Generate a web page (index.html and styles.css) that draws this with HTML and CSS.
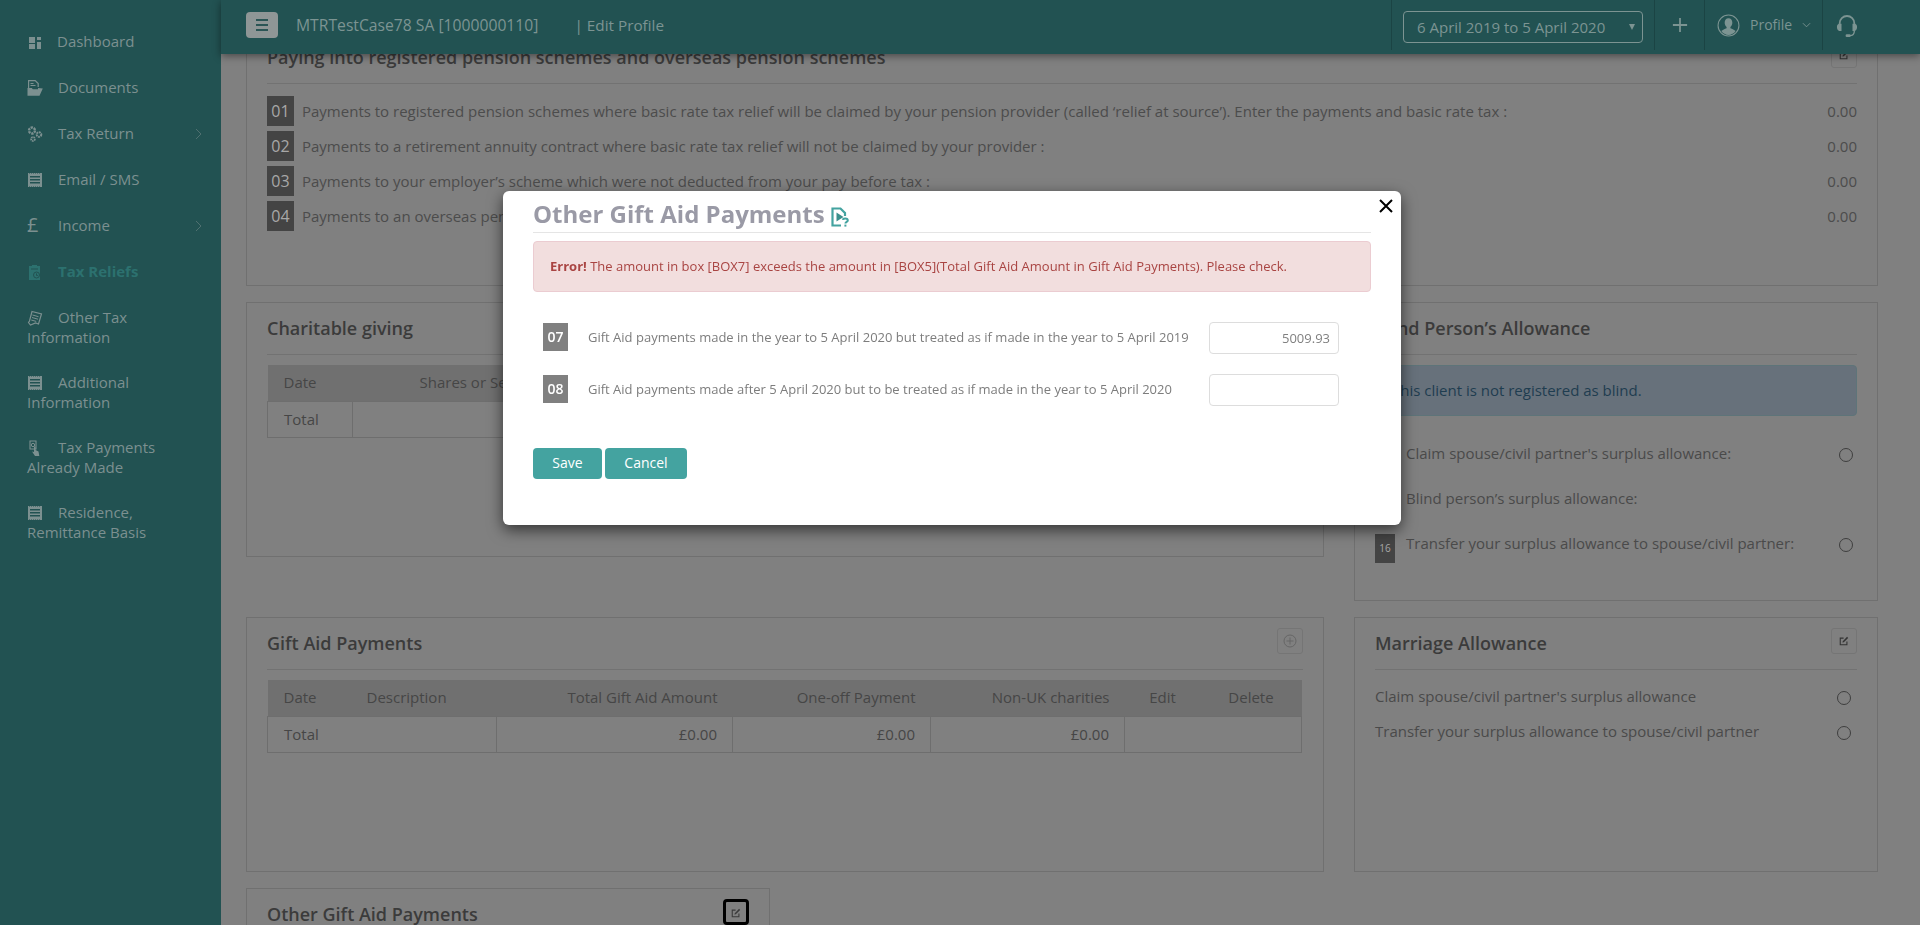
FILE: index.html
```html
<!DOCTYPE html>
<html lang="en">
<head>
<meta charset="utf-8">
<title>Edit Profile</title>
<link rel="stylesheet" href="styles.css">
</head>
<body>
<svg class="sprites" aria-hidden="true">
  <symbol id="receipt" viewBox="0 0 16 16">
    <path fill="currentColor" d="M1 1h14v14H1z"/>
    <path fill="#225252" d="M3 4h10v1.500H3zM3 7h10v1.500H3zM3 10h10v1.500H3z"/>
    <path fill="#225252" d="M2 1h1v.6H2zM4 1h1v.6H4zM6 1h1v.6H6zM8 1h1v.6H8zM10 1h1v.6h-1zM12 1h1v.6h-1zM2 14.400h1v.6H2zM4 14.400h1v.6H4zM6 14.400h1v.6H6zM8 14.400h1v.6H8zM10 14.400h1v.6h-1zM12 14.400h1v.6h-1z"/>
  </symbol>
  <symbol id="edit" viewBox="0 0 12 12">
    <path fill="none" stroke="currentColor" stroke-width="1.300" d="M9.500 6.500V10.500H1.500V2.500H5.500"/>
    <path fill="currentColor" d="M4.500 6.200 9.700 1l1.300 1.300-5.200 5.200-1.700.4z"/>
  </symbol>
  <symbol id="chev" viewBox="0 0 7 12">
    <path fill="none" stroke="currentColor" stroke-width="1" d="M1 1l5 5-5 5"/>
  </symbol>
</svg>

<div class="app">
  <aside class="sidebar">
    <nav class="nav">
      <a class="nav-item nav-first">
        <svg class="nav-icon" viewBox="0 0 16 16"><path fill="currentColor" d="M2 3h6v6H2zM10 3h4v3h-4zM2 10h6v5H2zM10 8h4v7h-4z"/></svg>Dashboard
      </a>
      <a class="nav-item">
        <svg class="nav-icon" viewBox="0 0 16 16"><path fill="none" stroke="currentColor" stroke-width="1.200" d="M1.600 9V.6h6.600l3 3V7"/><path stroke="currentColor" d="M3.500 3.500h3M3.500 5.500h5"/><path fill="currentColor" d="M.5 8h4.300l1 1.300H11V8l4.800.5L12.500 15.800H.5z"/></svg>Documents
      </a>
      <a class="nav-item">
        <svg class="nav-icon" viewBox="0 0 16 16"><g fill="none" stroke="currentColor"><circle cx="5" cy="4.500" r="3" stroke-width="2.400" stroke-dasharray="2.300 .8"/><circle cx="12" cy="8.500" r="2.300" stroke-width="2" stroke-dasharray="1.800 .6"/><circle cx="6" cy="13" r="1.900" stroke-width="1.800" stroke-dasharray="1.500 .6"/></g></svg>Tax Return
        <svg class="nav-chev"><use href="#chev"/></svg>
      </a>
      <a class="nav-item">
        <svg class="nav-icon"><use href="#receipt"/></svg>Email / SMS
      </a>
      <a class="nav-item">
        <span class="nav-glyph">£</span>Income
        <svg class="nav-chev"><use href="#chev"/></svg>
      </a>
      <a class="nav-item is-active">
        <svg class="nav-icon" viewBox="0 0 16 16"><path fill="currentColor" d="M2 2h3V1h5v1h3v14H2z"/><circle cx="9.500" cy="11" r="3" fill="none" stroke="#225252"/><path stroke="#225252" d="M9.500 9.500V11l1 1M4 5h7"/></svg>Tax Reliefs
      </a>
      <a class="nav-item nav-tall">
        <svg class="nav-icon" viewBox="0 0 16 16"><path fill="none" stroke="currentColor" stroke-width="1.200" d="M5 1.500l9.500 2.500-3 10-3-1-5 2-2-2.500 1-1.500z"/><path stroke="currentColor" d="M5.500 5l6 1.700M5 7.500l6 1.700M4.200 10l5 1.400"/></svg>Other Tax Information
      </a>
      <a class="nav-item nav-tall">
        <svg class="nav-icon"><use href="#receipt"/></svg>Additional Information
      </a>
      <a class="nav-item nav-tall">
        <svg class="nav-icon" viewBox="0 0 16 16"><path fill="none" stroke="currentColor" stroke-width="1.100" d="M3 1h6v8H3z"/><circle cx="6" cy="5" r="1.700" fill="none" stroke="currentColor"/><path fill="currentColor" d="M7 6.500h1.500V10l3 1.500.8 4.500H8L5 11.500l2 .5z"/></svg>Tax Payments Already Made
      </a>
      <a class="nav-item nav-tall">
        <svg class="nav-icon"><use href="#receipt"/></svg>Residence, Remittance Basis
      </a>
    </nav>
  </aside>

  <div class="main">
    <header class="topbar">
      <button class="menu-btn" type="button" aria-label="Menu"><span></span><span></span><span></span></button>
      <span class="client">MTRTestCase78 SA [1000000110]</span>
      <span class="crumb">| Edit Profile</span>
      <div class="top-tools">
        <div class="tool tool-period">
          <div class="period"><span>6 April 2019 to 5 April 2020</span><i class="caret"></i></div>
        </div>
        <div class="tool tool-plus">
          <svg class="plus" viewBox="0 0 18 18"><path stroke="currentColor" stroke-width="2" d="M9 1v16M1 9h16"/></svg>
        </div>
        <div class="tool tool-profile">
          <svg class="avatar" viewBox="0 0 24 24"><circle cx="12" cy="12" r="10.900" fill="none" stroke="currentColor" stroke-width="1.100"/><path fill="currentColor" d="M12 4.500c2.600 0 4 2 4 4.600 0 2-1 3.600-2 4.400v1.300c2 .7 4 1.500 5.500 3A10 10 0 0 1 12 22a10 10 0 0 1-7.500-4.200c1.500-1.500 3.500-2.300 5.500-3v-1.300c-1-.8-2-2.400-2-4.400 0-2.600 1.400-4.600 4-4.600z"/></svg>
          <span class="profile-name">Profile</span>
          <svg class="profile-chev" viewBox="0 0 10 6"><path fill="none" stroke="currentColor" d="M1 1l4 4 4-4"/></svg>
        </div>
        <div class="tool tool-help">
          <svg class="headset" viewBox="0 0 24 26"><path fill="none" stroke="currentColor" stroke-width="2" d="M4 12V9.500a8 8 0 0 1 16 0V12"/><path fill="currentColor" d="M3.500 10C1.500 10.500 1 12 1 13.500S1.500 17 3.500 18H6v-8zM20.500 10c2 .5 2.500 2 2.500 3.500S22.500 17 20.500 18H18v-8z"/><path fill="none" stroke="currentColor" stroke-width="1.500" d="M20 18c0 3-2 5-5 5"/><rect x="10.500" y="21.500" width="5.500" height="3" rx="1.200" fill="currentColor"/></svg>
        </div>
      </div>
    </header>

    <div class="content">
      <section class="card card-pension">
        <div class="card-head">
          <h2>Paying into registered pension schemes and overseas pension schemes</h2>
          <button class="icon-btn" type="button" aria-label="Edit"><svg><use href="#edit"/></svg></button>
        </div>
        <div class="pension-list">
          <div class="line"><b class="num">01</b><span>Payments to registered pension schemes where basic rate tax relief will be claimed by your pension provider (called ‘relief at source’). Enter the payments and basic rate tax :</span><em>0.00</em></div>
          <div class="line"><b class="num">02</b><span>Payments to a retirement annuity contract where basic rate tax relief will not be claimed by your provider :</span><em>0.00</em></div>
          <div class="line"><b class="num">03</b><span>Payments to your employer’s scheme which were not deducted from your pay before tax :</span><em>0.00</em></div>
          <div class="line"><b class="num">04</b><span>Payments to an overseas pension scheme which is not UK-registered :</span><em>0.00</em></div>
        </div>
      </section>

      <div class="row row-second">
        <section class="card card-wide">
          <div class="card-head"><h2>Charitable giving</h2></div>
          <table class="data charity">
            <colgroup><col class="c1"><col class="c2"><col></colgroup>
            <thead><tr><th colspan="2">Date</th><th>Shares or Securities</th></tr></thead>
            <tbody><tr><td>Total</td><td colspan="2"></td></tr></tbody>
          </table>
        </section>
        <section class="card card-side card-blind">
          <div class="card-head"><h2>Blind Person’s Allowance</h2></div>
          <div class="alert-info">This client is not registered as blind.</div>
          <div class="opts">
            <div class="opt"><b class="num-sm">14</b><span>Claim spouse/civil partner's surplus allowance:</span><i class="radio"></i></div>
            <div class="opt"><b class="num-sm">15</b><span>Blind person’s surplus allowance:</span></div>
            <div class="opt"><b class="num-sm">16</b><span>Transfer your surplus allowance to spouse/civil partner:</span><i class="radio"></i></div>
          </div>
        </section>
      </div>

      <div class="row">
        <section class="card card-wide">
          <div class="card-head">
            <h2>Gift Aid Payments</h2>
            <button class="icon-btn" type="button" aria-label="Add">
              <svg class="add" viewBox="0 0 14 14"><circle cx="7" cy="7" r="6" fill="none" stroke="currentColor"/><path stroke="currentColor" d="M7 3.500v7M3.500 7h7"/></svg>
            </button>
          </div>
          <table class="data gift">
            <colgroup><col class="g1"><col class="g2"><col class="g3"><col class="g4"><col class="g5"><col class="g6"><col class="g7"></colgroup>
            <thead>
              <tr><th>Date</th><th>Description</th><th class="r">Total Gift Aid Amount</th><th class="r">One-off Payment</th><th class="r">Non-UK charities</th><th class="c">Edit</th><th class="c">Delete</th></tr>
            </thead>
            <tbody>
              <tr><td colspan="2">Total</td><td class="r">£0.00</td><td class="r">£0.00</td><td class="r">£0.00</td><td colspan="2"></td></tr>
            </tbody>
          </table>
        </section>
        <section class="card card-side">
          <div class="card-head">
            <h2>Marriage Allowance</h2>
            <button class="icon-btn" type="button" aria-label="Edit"><svg><use href="#edit"/></svg></button>
          </div>
          <div class="marriage">
            <div class="m-opt"><span>Claim spouse/civil partner's surplus allowance</span><i class="radio"></i></div>
            <div class="m-opt"><span>Transfer your surplus allowance to spouse/civil partner</span><i class="radio"></i></div>
          </div>
        </section>
      </div>

      <div class="row">
        <section class="card card-side">
          <div class="card-head">
            <h2>Other Gift Aid Payments</h2>
            <button class="icon-btn is-focus" type="button" aria-label="Edit"><svg><use href="#edit"/></svg></button>
          </div>
        </section>
      </div>
    </div>
  </div>
</div>

<div class="modal" role="dialog">
  <button class="close" type="button" aria-label="Close"><svg viewBox="0 0 14 14"><path stroke="#000" stroke-width="2" d="M1 1l12 12M13 1L1 13"/></svg></button>
  <div class="modal-head">
    <h1>Other Gift Aid Payments</h1>
    <svg class="help" viewBox="0 0 18 20"><path fill="none" stroke="currentColor" stroke-width="2.200" d="M10 18.500H1.500V1.500h8l4.500 4.500v3"/><path fill="#3c8f8c" d="M5.500 5.500l7 4.500-7 4.500z"/><path fill="none" stroke="currentColor" stroke-width="2" d="M11.800 12.800c.3-1.700 5-1.700 5 .6 0 1.600-2.400 1.500-2.400 3.200"/><rect x="13.400" y="17.600" width="2" height="2" fill="currentColor"/></svg>
  </div>
  <div class="alert-error"><strong>Error!</strong> The amount in box [BOX7] exceeds the amount in [BOX5](Total Gift Aid Amount in Gift Aid Payments). Please check.</div>
  <form class="modal-form">
    <div class="field"><b class="num-md">07</b><label for="b7">Gift Aid payments made in the year to 5 April 2020 but treated as if made in the year to 5 April 2019</label><input id="b7" type="text" value="5009.93"></div>
    <div class="field"><b class="num-md">08</b><label for="b8">Gift Aid payments made after 5 April 2020 but to be treated as if made in the year to 5 April 2020</label><input id="b8" type="text"></div>
    <div class="actions"><button class="btn btn-save" type="button">Save</button><button class="btn btn-cancel" type="button">Cancel</button></div>
  </form>
</div>
</body>
</html>
```

FILE: styles.css
```css
* { box-sizing: border-box; }
html, body { margin: 0; height: 100%; overflow: hidden; }
body {
  background: #808080;
  color: #4a4a4a;
  font-family: "Open Sans", "Liberation Sans", sans-serif;
  font-size: 15px;
  line-height: 20px;
}
.sprites { display: none; }
.app { display: flex; height: 925px; overflow: hidden; }

/* sidebar */
.sidebar { flex: 0 0 221px; background: #225252; color: #7c9090; }
.nav { padding-top: 18px; }
.nav-item {
  display: block;
  position: relative;
  padding: 13px 30px 13px 27px;
  font-size: 15px;
  line-height: 20px;
}
.nav-tall { padding-top: 12.5px; padding-bottom: 12.5px; }
.nav-icon { width: 16px; height: 16px; margin-right: 15px; vertical-align: -3px; }
.nav-first .nav-icon { margin-right: 14px; }
.nav-glyph {
  display: inline-block;
  width: 16px;
  height: 20px;
  margin-right: 15px;
  font-size: 20px;
  line-height: 20px;
  vertical-align: top;
}
.nav-chev { position: absolute; right: 19px; top: 18px; width: 7px; height: 12px; color: #4f7070; }
.is-active { color: #2c716f; font-weight: 700; }

/* topbar */
.main { flex: 1; min-width: 0; display: flex; flex-direction: column; }
.topbar {
  position: relative;
  z-index: 2;
  flex: 0 0 54px;
  display: flex;
  align-items: center;
  padding: 0 0 4px 25px;
  background: #225252;
  color: #7c9492;
  box-shadow: 0 2px 8px rgba(0, 0, 0, .45);
}
.menu-btn {
  display: flex;
  flex-direction: column;
  justify-content: center;
  gap: 3px;
  align-items: center;
  width: 32px;
  height: 26px;
  padding: 0;
  border: 0;
  border-radius: 4px;
  background: #8f9696;
}
.menu-btn span { width: 12px; height: 2px; background: #2b5555; }
.client { margin-left: 18px; font-size: 15.700px; }
.crumb { margin-left: 36px; font-size: 15.300px; }
.top-tools { margin-left: auto; display: flex; height: 50px; align-self: flex-start; }
.tool { display: flex; align-items: center; border-left: 1px solid #1b4444; }
.tool-period { width: 263px; padding-left: 11px; }
.period {
  display: flex;
  align-items: center;
  justify-content: space-between;
  width: 240px;
  height: 32px;
  margin-top: 4px;
  padding: 0 7px 0 13px;
  border: 1px solid #7c9492;
  border-radius: 4px;
  font-size: 15px;
}
.caret { border: 3px solid transparent; border-top: 6px solid #7c9492; border-bottom: 0; }
.tool-plus { width: 50px; justify-content: center; }
.plus { width: 16px; height: 16px; }
.tool-profile { width: 118px; padding-left: 12px; }
.avatar { width: 23px; height: 23px; }
.profile-name { margin-left: 10px; font-size: 14px; }
.profile-chev { width: 9px; height: 6px; margin-left: 10px; }
.tool-help { width: 98px; padding-left: 13px; }
.headset { width: 22px; height: 25px; margin-top: 2px; }

/* content */
.content { margin-top: -23px; padding: 0 42px 0 25px; }
.row { display: flex; align-items: flex-start; gap: 30px; margin-top: 16px; }
.card {
  position: relative;
  padding: 0 20px;
  border: 1px solid #707070;
}
.card-pension { height: 255px; }
.card-wide { flex: 0 0 1078px; height: 255px; }
.card-side { flex: 0 0 524px; height: 255px; }
.card-blind { height: 299px; }
.row-second { height: 299px; }
.card-head {
  display: flex;
  align-items: center;
  justify-content: space-between;
  height: 52px;
  padding-bottom: 1px;
  border-bottom: 1px solid #727272;
}
.card-head h2 { margin: 0; font-size: 18px; font-weight: 600; line-height: 24px; color: #3b3b3b; }
.icon-btn {
  display: flex;
  align-items: center;
  justify-content: center;
  align-self: flex-start;
  width: 26px;
  height: 26px;
  margin-top: 10px;
  padding: 0;
  border: 1px solid #757575;
  border-radius: 3px;
  background: transparent;
  color: #333;
}
.icon-btn svg { width: 10px; height: 10px; }
.icon-btn .add { width: 14px; height: 14px; color: #666; }
.is-focus { border: 3px solid #000; border-radius: 4px; color: #3a3a3a; padding: 2px 0 0; }

.pension-list { margin-top: 12px; }
.line { display: flex; align-items: center; height: 30px; margin-bottom: 5px; padding-bottom: 1px; }
.line span { color: #4c4c4c; }
.line em { margin-left: auto; font-style: normal; color: #4c4c4c; }
.num {
  flex: none;
  align-self: flex-start;
  width: 27px;
  height: 30px;
  margin-right: 8px;
  background: #444;
  color: #a8a8a8;
  font-size: 16px;
  font-weight: 400;
  line-height: 30px;
  text-align: center;
}

/* tables */
.data {
  width: 1034px;
  margin-top: 10px;
  border-collapse: collapse;
  table-layout: fixed;
}
.data th { height: 36px; padding: 0 16px 2px; background: #707070; font-weight: 400; text-align: left; color: #464646; white-space: nowrap; }
.data td { height: 36px; padding: 0 16px 1px; border: 1px solid #6e6e6e; color: #464646; }
.data .r { text-align: right; padding-right: 15px; }
.data .c { text-align: center; }
.c1 { width: 85px; }
.c2 { width: 51px; }
.g1 { width: 83px; }
.g2 { width: 146px; }
.g3 { width: 236px; }
.g4 { width: 198px; }
.g5 { width: 194px; }
.g6 { width: 76px; }
.g7 { width: 101px; }

/* blind + marriage */
.alert-info {
  height: 51px;
  margin-top: 10px;
  padding: 0 16px;
  border: 1px solid #5e7479;
  border-radius: 4px;
  background: #67717b;
  color: #1f3d50;
  line-height: 48px;
}
.opts { margin-top: 28px; }
.opt { display: flex; align-items: flex-start; margin-bottom: 16px; height: 29px; }
.opt span { flex: 1; margin-top: -1px; }
.num-sm {
  flex: none;
  width: 20px;
  height: 29px;
  margin-right: 11px;
  background: #444;
  color: #a8a8a8;
  font-size: 10px;
  font-weight: 400;
  line-height: 29px;
  text-align: center;
}
.radio {
  flex: none;
  width: 14px;
  height: 14px;
  border: 1px solid #3e3e3e;
  border-radius: 50%;
}
.opt .radio { margin: 4px 4px 0 0; }
.marriage { margin-top: 16px; }
.m-opt { display: flex; justify-content: space-between; height: 35px; }
.m-opt .radio { margin: 5px 6px 0 0; }

/* modal */
.modal {
  position: fixed;
  left: 503px;
  top: 191px;
  z-index: 5;
  width: 898px;
  height: 334px;
  padding: 0 30px;
  border-radius: 6px;
  background: #fff;
  box-shadow: 0 5px 15px rgba(0, 0, 0, .6);
  color: #777;
}
.close {
  position: absolute;
  right: 8px;
  top: 8px;
  width: 14px;
  height: 14px;
  padding: 0;
  border: 0;
  background: none;
}
.close svg { display: block; }
.modal-head { display: flex; align-items: center; height: 42px; padding-top: 5px; border-bottom: 1px solid #e5e5e5; }
.modal-head h1 { margin: 0; font-size: 24px; font-weight: 700; line-height: 30px; color: #9a9aa6; }
.help { width: 18px; height: 20px; margin: 6px 0 0 6px; color: #44a3a0; }
.alert-error {
  height: 51px;
  margin-top: 8px;
  padding: 0 16px;
  border: 1px solid #ebccd1;
  border-radius: 4px;
  background: #f2dede;
  color: #a94442;
  font-size: 13px;
  line-height: 49px;
}
.modal-form { margin-top: 30px; }
.field { display: flex; align-items: flex-start; height: 32px; margin-bottom: 20px; padding: 0 32px 0 10px; }
.num-md {
  flex: none;
  width: 25px;
  height: 28px;
  margin: 1px 20px 0 0;
  background: #808080;
  color: #fff;
  font-size: 14px;
  font-weight: 600;
  line-height: 28px;
  text-align: center;
}
.field label { flex: 1; font-size: 13px; line-height: 30px; color: #7d7d7d; }
.field input {
  flex: none;
  width: 130px;
  height: 32px;
  padding: 0 8px;
  border: 1px solid #ddd;
  border-radius: 4px;
  outline: 0;
  background: #fff;
  color: #808080;
  font: 13px "Open Sans", sans-serif;
  text-align: right;
}
.actions { display: flex; gap: 3px; margin-top: 42px; }
.btn {
  height: 31px;
  border: 0;
  border-radius: 4px;
  background: #44a3a0;
  color: #fff;
  font: 14px "Open Sans", sans-serif;
  padding: 0 0 2px;
}
.btn-save { width: 69px; }
.btn-cancel { width: 82px; }
```
